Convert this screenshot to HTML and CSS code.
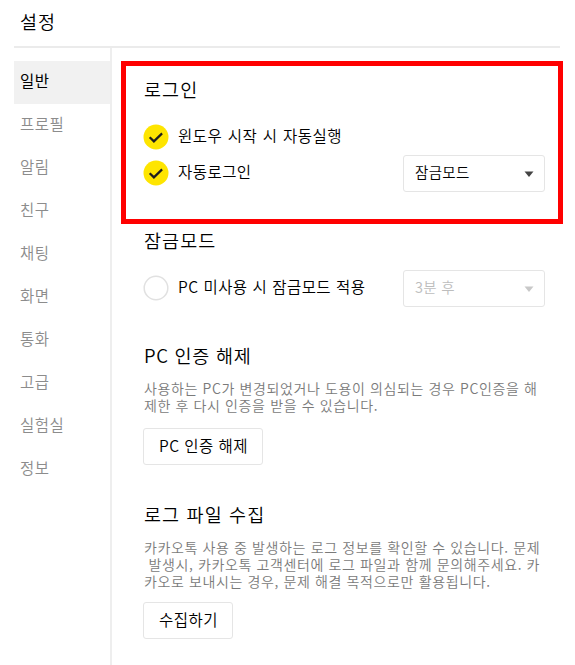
FILE: index.html
```html
<!DOCTYPE html>
<html lang="ko">
<head>
  <meta charset="UTF-8">
  <meta name="viewport" content="width=device-width, initial-scale=1.0">
  <title>설정</title>
  <link rel="stylesheet" href="styles.css">
</head>
<body>
  <div class="settings">
    <header class="header">
      <h1>설정</h1>
    </header>

    <div class="body">
      <nav class="menu">
        <a class="menu-item active">일반</a>
        <a class="menu-item">프로필</a>
        <a class="menu-item">알림</a>
        <a class="menu-item">친구</a>
        <a class="menu-item">채팅</a>
        <a class="menu-item">화면</a>
        <a class="menu-item">통화</a>
        <a class="menu-item">고급</a>
        <a class="menu-item">실험실</a>
        <a class="menu-item">정보</a>
      </nav>

      <main class="content">
        <div class="highlight"></div>

        <section class="section login">
          <h2>로그인</h2>
          <div class="row">
            <svg class="check" viewBox="0 0 26 26">
              <circle cx="13" cy="13" r="12.5" fill="#fee500"/>
              <path d="M6.7 13.2l4.2 4.2 8.2-8" fill="none" stroke="#1e1e1e" stroke-width="2.2"/>
            </svg>
            <span class="label">윈도우 시작 시 자동실행</span>
          </div>
          <div class="row">
            <svg class="check" viewBox="0 0 26 26">
              <circle cx="13" cy="13" r="12.5" fill="#fee500"/>
              <path d="M6.7 13.2l4.2 4.2 8.2-8" fill="none" stroke="#1e1e1e" stroke-width="2.2"/>
            </svg>
            <span class="label">자동로그인</span>
            <div class="select">
              <span>잠금모드</span>
              <svg class="arrow" viewBox="0 0 10 6"><path d="M0.5 0.5h9L5 6z"/></svg>
            </div>
          </div>
        </section>

        <section class="section lock">
          <h2>잠금모드</h2>
          <div class="row">
            <svg class="check" viewBox="0 0 26 26">
              <circle cx="13" cy="13" r="11.8" fill="#fff" stroke="#e1e1e1" stroke-width="1.5"/>
            </svg>
            <span class="label label-pc">PC 미사용 시 잠금모드 적용</span>
            <div class="select disabled">
              <span>3분 후</span>
              <svg class="arrow" viewBox="0 0 10 6"><path d="M0.5 0.5h9L5 6z"/></svg>
            </div>
          </div>
        </section>

        <section class="section auth">
          <h2 class="title-pc">PC 인증 해제</h2>
          <p class="desc">사용하는 PC가 변경되었거나 도용이 의심되는 경우 PC인증을 해<br>제한 후 다시 인증을 받을 수 있습니다.</p>
          <button class="btn">PC 인증 해제</button>
        </section>

        <section class="section log">
          <h2>로그 파일 수집</h2>
          <p class="desc">카카오톡 사용 중 발생하는 로그 정보를 확인할 수 있습니다. 문제<br>&nbsp;발생시, 카카오톡 고객센터에 로그 파일과 함께 문의해주세요. 카<br>카오로 보내시는 경우, 문제 해결 목적으로만 활용됩니다.</p>
          <button class="btn">수집하기</button>
        </section>
      </main>
    </div>
  </div>
</body>
</html>
```

FILE: styles.css
```css
* {
  box-sizing: border-box;
}

body {
  margin: 0;
  background-color: #fff;
  color: #000;
  font-family: "Noto Sans CJK KR", sans-serif;
  font-weight: 350;
  font-size: 15.5px;
  letter-spacing: 0.45px;
}

.settings {
  height: 665px;
  padding-left: 14px;
  display: flex;
  flex-direction: column;
  overflow: hidden;
}

.header {
  width: 546px;
  height: 48px;
  padding-left: 6px;
  border-bottom: 2px solid #ebebeb;
}

h1,
h2 {
  margin: 0;
  font-size: 18.5px;
  font-weight: 350;
  letter-spacing: 1.1px;
  line-height: 24px;
  white-space: nowrap;
}

h1 {
  padding-top: 9px;
}

h2 {
  padding-left: 1px;
}

.body {
  flex: 1;
  display: flex;
}

.menu {
  width: 98px;
  padding-top: 13px;
  border-right: 2px solid #eee;
}

.menu-item {
  display: block;
  height: 43px;
  padding-left: 6px;
  line-height: 39px;
  color: #8c8c8c;
}

.menu-item.active {
  background-color: #f1f1f1;
  color: #000;
  font-weight: 400;
}

.content {
  position: relative;
  width: 433px;
  padding: 29px 0 0 31px;
}

/* red frame over the login section */
.highlight {
  position: absolute;
  top: 13px;
  left: 9px;
  width: 442px;
  height: 163px;
  border: 5px solid #ff0000;
}

.row {
  display: flex;
  align-items: center;
  height: 36px;
}

.check {
  width: 26px;
  height: 26px;
}

.label {
  margin-left: 9px;
  padding-bottom: 4px;
  word-spacing: 0.8px;
  white-space: nowrap;
}

.label-pc {
  word-spacing: 0.2px;
}

.select {
  display: flex;
  align-items: center;
  justify-content: space-between;
  width: 142px;
  height: 37px;
  margin-left: auto;
  padding: 0 10px 3px 11px;
  border: 1.5px solid #e5e5e5;
  border-radius: 3px;
  font-size: 14.5px;
  letter-spacing: 0.3px;
}

.arrow {
  width: 10px;
  height: 6px;
  margin-top: 4px;
  fill: #444;
}

.disabled {
  color: #bdbdbd;
}

.disabled .arrow {
  fill: #c8c8c8;
}

.login {
  height: 151px;
}

.login h2 {
  margin-bottom: 18px;
}

.lock {
  height: 115px;
}

.lock h2 {
  margin-bottom: 18px;
}

.auth {
  height: 159px;
}

.title-pc {
  letter-spacing: 0.7px;
}

.desc {
  margin: 13px 0 14px 1px;
  color: #7a7a7a;
  font-size: 14px;
  letter-spacing: 0.62px;
  line-height: 17px;
  white-space: nowrap;
}

.log .desc {
  margin-bottom: 12px;
}

.btn {
  display: block;
  height: 37px;
  padding: 0 14px 3px 15px;
  border: 1.5px solid #e5e5e5;
  border-radius: 3px;
  background-color: #fff;
  color: #000;
  font: inherit;
  letter-spacing: inherit;
}
```
